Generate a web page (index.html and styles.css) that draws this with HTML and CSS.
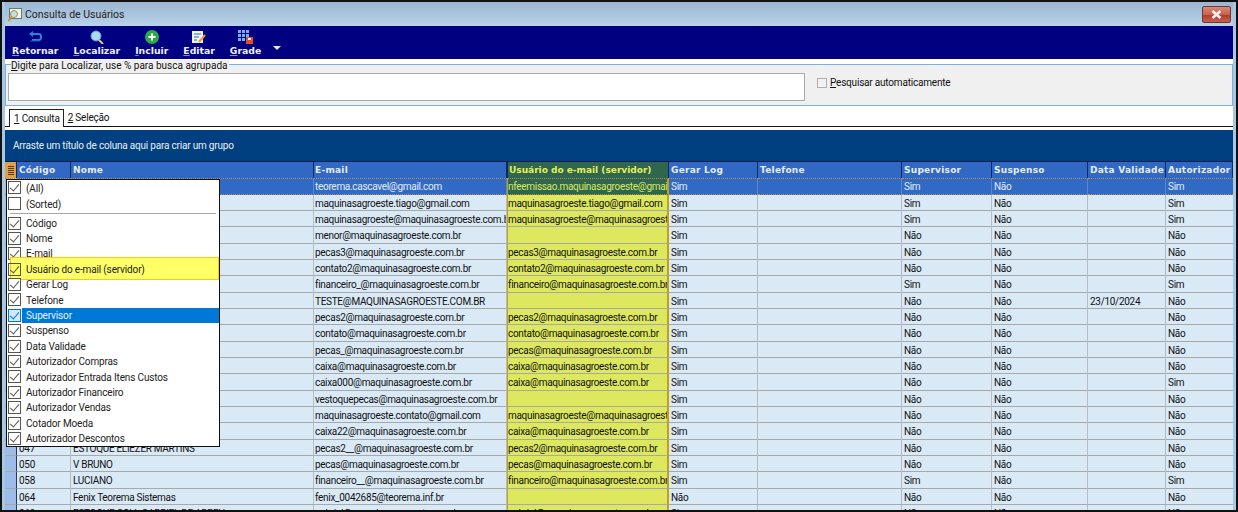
FILE: index.html
```html
<!DOCTYPE html>
<html lang="pt-BR">
<head>
    <meta charset="UTF-8">
    <title>Consulta de Usuários</title>
    <link rel="stylesheet" href="styles.css">
</head>
<body>
    <div class="window">
        <div class="titlebar">
            <svg class="title-icon" width="16" height="16" viewBox="0 0 16 16">
                <rect x="2.500" y="1.500" width="12" height="10" fill="#f4f6ee" stroke="#5f7f6a"/>
                <circle cx="7" cy="7" r="3.500" fill="#bfe0ee" stroke="#b08a3c"/>
                <path d="M4.500 9.500 1.500 14" stroke="#c8922a" stroke-width="2"/>
            </svg>
            <span class="title-text">Consulta de Usuários</span>
            <button class="close">
                <svg width="13" height="9" viewBox="0 0 13 9"><path d="M2.500 1 10.500 8M10.500 1 2.500 8" stroke="#f4f0ee" stroke-width="2.600"/></svg>
            </button>
        </div>

        <div class="toolbar">
            <div class="tool">
                <svg width="18" height="14" viewBox="0 0 18 14"><path d="M4 4H13Q15 4 15 7T13 10H6" fill="none" stroke="#2f80d8" stroke-width="2"/><path d="M7 1 3 4 7 7Z" fill="#2f80d8"/><path d="M4 11H13" stroke="#1c5fb4"/></svg>
                <span><u>R</u>etornar</span>
            </div>
            <div class="tool">
                <svg width="18" height="14" viewBox="0 0 18 14"><circle cx="8" cy="6" r="5" fill="#a9d8f0" stroke="#5b9bd0"/><path d="M11 10 15 14" stroke="#d8c89a" stroke-width="2"/></svg>
                <span><u>L</u>ocalizar</span>
            </div>
            <div class="tool">
                <svg width="18" height="14" viewBox="0 0 18 14"><circle cx="9" cy="7" r="7" fill="#2fa84a"/><path d="M9 3.500V10.500M5.500 7H12.500" stroke="#fff" stroke-width="2"/></svg>
                <span><u>I</u>ncluir</span>
            </div>
            <div class="tool">
                <svg width="18" height="14" viewBox="0 0 18 14"><rect x="2" y="1" width="11" height="12" fill="#eef2fa"/><path d="M4 4H11M4 7H9M4 10H7" stroke="#3a5fa8"/><path d="M15 5 9 12" stroke="#e89a2a" stroke-width="2"/></svg>
                <span><u>E</u>ditar</span>
            </div>
            <div class="tool">
                <svg width="18" height="14" viewBox="0 0 18 14"><path d="M1 0H4V3H1ZM5 0H8V3H5ZM9 0H12V3H9ZM1 4H4V7H1ZM5 4H8V7H5ZM9 4H12V7H9ZM1 8H4V11H1ZM5 8H8V11H5Z" fill="#6fb0ee"/><rect x="9" y="7" width="7" height="7" fill="#e84a2a"/><rect x="11" y="8" width="3" height="2" fill="#fff"/></svg>
                <span><u>G</u>rade</span>
            </div>
            <div class="tool-arrow"></div>
        </div>

        <div class="search">
            <div class="search-label"><u>D</u>igite para Localizar, use % para busca agrupada</div>
            <div class="search-input"></div>
            <label class="auto"><span class="auto-box"></span><span><u>P</u>esquisar automaticamente</span></label>
        </div>

        <div class="tabs">
            <div class="tab active"><u>1</u> Consulta</div>
            <div class="tab"><u>2</u> Seleção</div>
        </div>

        <div class="grid-panel">
            <div class="group-box">Arraste um título de coluna aqui para criar um grupo</div>

            <div class="grid">
                <div class="row head">
                    <div class="cell indicator"><span class="customize"></span></div>
                    <div class="cell">Código</div><div class="cell">Nome</div><div class="cell">E-mail</div><div class="cell">Usuário do e-mail (servidor)</div><div class="cell">Gerar Log</div><div class="cell">Telefone</div><div class="cell">Supervisor</div><div class="cell">Suspenso</div><div class="cell">Data Validade</div><div class="cell">Autorizador Compras</div>
                </div>
                <div class="row selected">
                    <div class="cell indicator"></div>
                    <div class="cell">001</div><div class="cell">TEOREMA</div><div class="cell">teorema.cascavel@gmail.com</div><div class="cell">nfeemissao.maquinasagroeste@gmail.com</div><div class="cell">Sim</div><div class="cell"></div><div class="cell">Sim</div><div class="cell">Não</div><div class="cell"></div><div class="cell">Sim</div>
                </div>
                <div class="row">
                    <div class="cell indicator"></div>
                    <div class="cell">002</div><div class="cell">TIAGO</div><div class="cell">maquinasagroeste.tiago@gmail.com</div><div class="cell">maquinasagroeste.tiago@gmail.com</div><div class="cell">Sim</div><div class="cell"></div><div class="cell">Sim</div><div class="cell">Não</div><div class="cell"></div><div class="cell">Sim</div>
                </div>
                <div class="row">
                    <div class="cell indicator"></div>
                    <div class="cell">003</div><div class="cell">ADMIN</div><div class="cell">maquinasagroeste@maquinasagroeste.com.br</div><div class="cell">maquinasagroeste@maquinasagroeste.com.br</div><div class="cell">Sim</div><div class="cell"></div><div class="cell">Sim</div><div class="cell">Não</div><div class="cell"></div><div class="cell">Sim</div>
                </div>
                <div class="row">
                    <div class="cell indicator"></div>
                    <div class="cell">005</div><div class="cell">MENOR</div><div class="cell">menor@maquinasagroeste.com.br</div><div class="cell"></div><div class="cell">Sim</div><div class="cell"></div><div class="cell">Não</div><div class="cell">Não</div><div class="cell"></div><div class="cell">Não</div>
                </div>
                <div class="row">
                    <div class="cell indicator"></div>
                    <div class="cell">008</div><div class="cell">PECAS 3</div><div class="cell">pecas3@maquinasagroeste.com.br</div><div class="cell">pecas3@maquinasagroeste.com.br</div><div class="cell">Sim</div><div class="cell"></div><div class="cell">Não</div><div class="cell">Não</div><div class="cell"></div><div class="cell">Não</div>
                </div>
                <div class="row">
                    <div class="cell indicator"></div>
                    <div class="cell">010</div><div class="cell">CONTATO 2</div><div class="cell">contato2@maquinasagroeste.com.br</div><div class="cell">contato2@maquinasagroeste.com.br</div><div class="cell">Sim</div><div class="cell"></div><div class="cell">Não</div><div class="cell">Não</div><div class="cell"></div><div class="cell">Não</div>
                </div>
                <div class="row">
                    <div class="cell indicator"></div>
                    <div class="cell">012</div><div class="cell">FINANCEIRO</div><div class="cell">financeiro_@maquinasagroeste.com.br</div><div class="cell">financeiro@maquinasagroeste.com.br</div><div class="cell">Sim</div><div class="cell"></div><div class="cell">Sim</div><div class="cell">Não</div><div class="cell"></div><div class="cell">Sim</div>
                </div>
                <div class="row">
                    <div class="cell indicator"></div>
                    <div class="cell">015</div><div class="cell">TESTE</div><div class="cell">TESTE@MAQUINASAGROESTE.COM.BR</div><div class="cell"></div><div class="cell">Sim</div><div class="cell"></div><div class="cell">Não</div><div class="cell">Não</div><div class="cell">23/10/2024</div><div class="cell">Não</div>
                </div>
                <div class="row">
                    <div class="cell indicator"></div>
                    <div class="cell">018</div><div class="cell">PECAS 2</div><div class="cell">pecas2@maquinasagroeste.com.br</div><div class="cell">pecas2@maquinasagroeste.com.br</div><div class="cell">Sim</div><div class="cell"></div><div class="cell">Não</div><div class="cell">Não</div><div class="cell"></div><div class="cell">Não</div>
                </div>
                <div class="row">
                    <div class="cell indicator"></div>
                    <div class="cell">020</div><div class="cell">CONTATO</div><div class="cell">contato@maquinasagroeste.com.br</div><div class="cell">contato@maquinasagroeste.com.br</div><div class="cell">Sim</div><div class="cell"></div><div class="cell">Não</div><div class="cell">Não</div><div class="cell"></div><div class="cell">Não</div>
                </div>
                <div class="row">
                    <div class="cell indicator"></div>
                    <div class="cell">024</div><div class="cell">PECAS</div><div class="cell">pecas_@maquinasagroeste.com.br</div><div class="cell">pecas@maquinasagroeste.com.br</div><div class="cell">Sim</div><div class="cell"></div><div class="cell">Não</div><div class="cell">Não</div><div class="cell"></div><div class="cell">Não</div>
                </div>
                <div class="row">
                    <div class="cell indicator"></div>
                    <div class="cell">028</div><div class="cell">CAIXA</div><div class="cell">caixa@maquinasagroeste.com.br</div><div class="cell">caixa@maquinasagroeste.com.br</div><div class="cell">Sim</div><div class="cell"></div><div class="cell">Não</div><div class="cell">Não</div><div class="cell"></div><div class="cell">Não</div>
                </div>
                <div class="row">
                    <div class="cell indicator"></div>
                    <div class="cell">030</div><div class="cell">CAIXA 000</div><div class="cell">caixa000@maquinasagroeste.com.br</div><div class="cell">caixa@maquinasagroeste.com.br</div><div class="cell">Sim</div><div class="cell"></div><div class="cell">Não</div><div class="cell">Não</div><div class="cell"></div><div class="cell">Sim</div>
                </div>
                <div class="row">
                    <div class="cell indicator"></div>
                    <div class="cell">033</div><div class="cell">ESTOQUE PECAS</div><div class="cell">vestoquepecas@maquinasagroeste.com.br</div><div class="cell"></div><div class="cell">Sim</div><div class="cell"></div><div class="cell">Não</div><div class="cell">Não</div><div class="cell"></div><div class="cell">Não</div>
                </div>
                <div class="row">
                    <div class="cell indicator"></div>
                    <div class="cell">038</div><div class="cell">CONTATO GMAIL</div><div class="cell">maquinasagroeste.contato@gmail.com</div><div class="cell">maquinasagroeste@maquinasagroeste.com.br</div><div class="cell">Sim</div><div class="cell"></div><div class="cell">Não</div><div class="cell">Não</div><div class="cell"></div><div class="cell">Não</div>
                </div>
                <div class="row">
                    <div class="cell indicator"></div>
                    <div class="cell">042</div><div class="cell">CAIXA 22</div><div class="cell">caixa22@maquinasagroeste.com.br</div><div class="cell">caixa@maquinasagroeste.com.br</div><div class="cell">Sim</div><div class="cell"></div><div class="cell">Não</div><div class="cell">Não</div><div class="cell"></div><div class="cell">Não</div>
                </div>
                <div class="row">
                    <div class="cell indicator"></div>
                    <div class="cell">047</div><div class="cell">ESTOQUE ELIEZER MARTINS</div><div class="cell">pecas2__@maquinasagroeste.com.br</div><div class="cell">pecas2@maquinasagroeste.com.br</div><div class="cell">Sim</div><div class="cell"></div><div class="cell">Não</div><div class="cell">Não</div><div class="cell"></div><div class="cell">Não</div>
                </div>
                <div class="row">
                    <div class="cell indicator"></div>
                    <div class="cell">050</div><div class="cell">V BRUNO</div><div class="cell">pecas@maquinasagroeste.com.br</div><div class="cell">pecas@maquinasagroeste.com.br</div><div class="cell">Sim</div><div class="cell"></div><div class="cell">Não</div><div class="cell">Não</div><div class="cell"></div><div class="cell">Não</div>
                </div>
                <div class="row">
                    <div class="cell indicator"></div>
                    <div class="cell">058</div><div class="cell">LUCIANO</div><div class="cell">financeiro__@maquinasagroeste.com.br</div><div class="cell">financeiro@maquinasagroeste.com.br</div><div class="cell">Sim</div><div class="cell"></div><div class="cell">Sim</div><div class="cell">Não</div><div class="cell"></div><div class="cell">Sim</div>
                </div>
                <div class="row">
                    <div class="cell indicator"></div>
                    <div class="cell">064</div><div class="cell">Fenix Teorema Sistemas</div><div class="cell">fenix_0042685@teorema.inf.br</div><div class="cell"></div><div class="cell">Não</div><div class="cell"></div><div class="cell">Não</div><div class="cell">Não</div><div class="cell"></div><div class="cell">Não</div>
                </div>
                <div class="row">
                    <div class="cell indicator"></div>
                    <div class="cell">069</div><div class="cell">ESTOQUE COLL GABRIEL DE ABREU</div><div class="cell">gabriel@maquinasagroeste.com.br</div><div class="cell">gabriel@maquinasagroeste.com.br</div><div class="cell">Sim</div><div class="cell"></div><div class="cell">Não</div><div class="cell">Não</div><div class="cell"></div><div class="cell">Não</div>
                </div>
            </div>

            <!-- lista de colunas aberta sobre a grade -->
            <div class="column-menu">
                <div class="menu-item"><span class="check on"></span>(All)</div>
                <div class="menu-item"><span class="check"></span>(Sorted)</div>
                <div class="menu-sep"></div>
                <div class="menu-item"><span class="check on"></span>Código</div>
                <div class="menu-item"><span class="check on"></span>Nome</div>
                <div class="menu-item"><span class="check on"></span>E-mail</div>
                <div class="menu-item marked"><span class="check on"></span>Usuário do e-mail (servidor)</div>
                <div class="menu-item"><span class="check on"></span>Gerar Log</div>
                <div class="menu-item"><span class="check on"></span>Telefone</div>
                <div class="menu-item current"><span class="check on"></span><span class="current-label">Supervisor</span></div>
                <div class="menu-item"><span class="check on"></span>Suspenso</div>
                <div class="menu-item"><span class="check on"></span>Data Validade</div>
                <div class="menu-item"><span class="check on"></span>Autorizador Compras</div>
                <div class="menu-item"><span class="check on"></span>Autorizador Entrada Itens Custos</div>
                <div class="menu-item"><span class="check on"></span>Autorizador Financeiro</div>
                <div class="menu-item"><span class="check on"></span>Autorizador Vendas</div>
                <div class="menu-item"><span class="check on"></span>Cotador Moeda</div>
                <div class="menu-item"><span class="check on"></span>Autorizador Descontos</div>
            </div>
        </div>
    </div>
</body>
</html>
```

FILE: styles.css
```css
* {
    margin: 0;
    padding: 0;
    box-sizing: border-box;
}
html, body {
    height: 100%;
    overflow: hidden;
}
body {
    background-color: #111;
    padding: 2px;
    font-family: "Roboto", "Liberation Sans", sans-serif;
    font-size: 10px;
    color: #111;
}
.window {
    height: 508px;
    display: flex;
    flex-direction: column;
    background-color: #fff;
    border: solid #a9c6e2;
    border-width: 0 3px 0 3px;
    overflow: hidden;
}

/* title */
.titlebar {
    height: 24px;
    flex: none;
    display: flex;
    align-items: center;
    background: linear-gradient(#9bb6d0, #bad2ec);
    margin: 0 -3px;
    padding: 1px 5px 0 5px;
}
.title-icon {
    margin-right: 2px;
}
.title-text {
    font-size: 10.500px;
    color: #222;
}
.close {
    margin-left: auto;
    width: 29px;
    height: 17px;
    border: 1px solid #6b3b34;
    border-radius: 2px;
    background: linear-gradient(#d98a7c 0, #c8604f 50%, #b03a28 51%, #c8604f 100%);
    display: flex;
    align-items: center;
    justify-content: center;
}

/* toolbar */
.toolbar {
    height: 33px;
    flex: none;
    display: flex;
    background-color: #000080;
    padding: 4px 0 0 7px;
    gap: 15px;
}
.tool {
    display: flex;
    flex-direction: column;
    align-items: center;
    font-family: "DejaVu Sans", sans-serif;
    font-weight: bold;
    font-size: 9.300px;
    color: #eef0fa;
    line-height: 13px;
}
.tool u {
    text-decoration-color: #8a8ac8;
}
.tool-arrow {
    align-self: flex-start;
    margin: 16px 0 0 -3px;
    border: 4px solid transparent;
    border-top: 4px solid #e8ecf8;
    border-bottom: 0;
}

/* search */
.search {
    height: 42px;
    flex: none;
    display: flex;
    align-items: flex-start;
    position: relative;
    background-color: #f0f0f0;
    border: 1px solid #7ab0dc;
    margin: 5px 0 0 0;
    padding: 8px 0 0 2px;
}
.search-label {
    position: absolute;
    left: 5px;
    top: -5px;
    background-color: #f0f0f0;
    padding-right: 1px;
    line-height: 11px;
}
.search-input {
    width: 797px;
    height: 28px;
    background-color: #fff;
    border: 1px solid #aaa;
}
.auto {
    display: flex;
    align-items: center;
    line-height: 12px;
    margin: 4px 0 0 12px;
    gap: 3px;
    letter-spacing: -0.2px;
}
.auto-box {
    width: 10px;
    height: 10px;
    background-color: #f2f2f2;
    border: 1px solid #b0b0b0;
}

/* tabs */
.tabs {
    height: 21px;
    flex: none;
    display: flex;
    align-items: flex-end;
    padding-left: 4px;
    letter-spacing: -0.2px;
    border-bottom: 1px solid #111;
}
.tab {
    height: 17px;
    line-height: 18px;
    padding: 0 4px;
}
.tab.active {
    height: 18px;
    line-height: 17px;
    border: 1px solid #222;
    border-bottom: 0;
    margin-bottom: -1px;
    background-color: #fff;
    padding: 0 3px 0 4px;
}

/* grid */
.grid-panel {
    flex: 1;
    min-height: 0;
    position: relative;
    overflow: hidden;
    margin-top: 3px;
}
.group-box {
    height: 32px;
    line-height: 32px;
    padding-left: 8px;
    background-color: #004080;
    color: #e8eef6;
    letter-spacing: -0.2px;
    border-bottom: 1px solid #0a1e50;
}
.grid {
    display: grid;
    grid-template-columns: 12px 54px 243px 193px 162px 89px 144px 90px 96px 78px 67px;
    grid-auto-rows: 16.330px;
    letter-spacing: -0.3px;
}
.row {
    display: contents;
}
.cell {
    line-height: 17px;
    padding-left: 2px;
    white-space: nowrap;
    overflow: hidden;
    background-color: #d9e9f6;
    border-right: 1px solid #b4bec8;
    border-bottom: 1px solid #a8a8a8;
}
.cell:last-child {
    border-right: 0;
}
.indicator {
    background-color: #9dbde8;
    border-right-color: #223a6a;
    padding: 0;
}
.row > :nth-child(4) {
    padding-left: 1px;
}
.row > :nth-child(5) {
    background-color: #dde85e;
    border-left: 1px solid #c2a01c;
    border-right: 2px solid #c2a01c;
    padding-left: 0;
}
.row.head .cell {
    height: 17px;
    font-family: "DejaVu Sans", sans-serif;
    font-weight: bold;
    font-size: 9px;
    letter-spacing: 0.25px;
    line-height: 16px;
    color: #e6ecf8;
    background-color: #3068c4;
    border-right: 1px solid #0c2a60;
    border-bottom: 1px solid #0c2a60;
}
.row.head > :nth-child(5) {
    background-color: #2e6650;
    color: #e8ee5a;
    letter-spacing: 0;
    padding-left: 1px;
    border-left: 1px solid #0c2a60;
}
.row.head .indicator {
    background-color: #e0a048;
    display: flex;
    align-items: center;
    justify-content: center;
}
.customize {
    width: 6px;
    height: 9px;
    background: repeating-linear-gradient(#5a3a10 0 1px, #e0a048 1px 2px);
}
.row.selected .cell {
    background-color: #316ac5;
    color: #e4ecf8;
    line-height: 15px;
    border-top: 1px dotted #c88a30;
    border-bottom: 1px dotted #c88a30;
    border-right-color: #5a86cf;
}
.row.selected > :nth-child(5) {
    background-color: #2e6650;
    color: #dde85e;
    border-left-color: #c2a01c;
    border-right-color: #c2a01c;
}
.row.selected .indicator {
    background-color: #9dbde8;
}

/* column customization popup */
.column-menu {
    position: absolute;
    left: 1px;
    top: 49px;
    width: 214px;
    height: 268px;
    background-color: #fff;
    border: 1px solid #111;
    color: #222;
    letter-spacing: -0.15px;
}
.menu-item {
    height: 15.400px;
    line-height: 15px;
    display: flex;
    align-items: center;
    position: relative;
    padding-left: 19px;
    white-space: nowrap;
}
.menu-item:nth-child(-n+2) {
    height: 16px;
}
.menu-sep {
    height: 1px;
    margin: 1px 3px 1.500px 3px;
    background-color: #a8a8a8;
}
.check {
    position: absolute;
    left: 1px;
    top: 1px;
    width: 13px;
    height: 13px;
    border: 1px solid #555;
    background-color: #fff;
}
.check.on::after {
    content: "";
    position: absolute;
    left: 3px;
    top: 0;
    width: 4px;
    height: 8px;
    border: solid #555;
    border-width: 0 1px 1px 0;
    transform: rotate(40deg);
}
.marked {
    z-index: 0;
}
.marked::before {
    content: "";
    position: absolute;
    z-index: -1;
    left: 3px;
    right: 0;
    top: -5px;
    height: 21px;
    background-color: #ffff66;
    border: 1px solid #fdc80e;
}
.marked .check {
    background-color: transparent;
}
.current .check {
    border-color: #0078d7;
    background-color: #d5e8f8;
}
.current .check.on::after {
    border-color: #0078d7;
}
.current-label {
    position: absolute;
    left: 15px;
    right: 0;
    top: 0;
    bottom: 0;
    padding-left: 4px;
    background-color: #0078d7;
    color: #e8f2fc;
}
```
